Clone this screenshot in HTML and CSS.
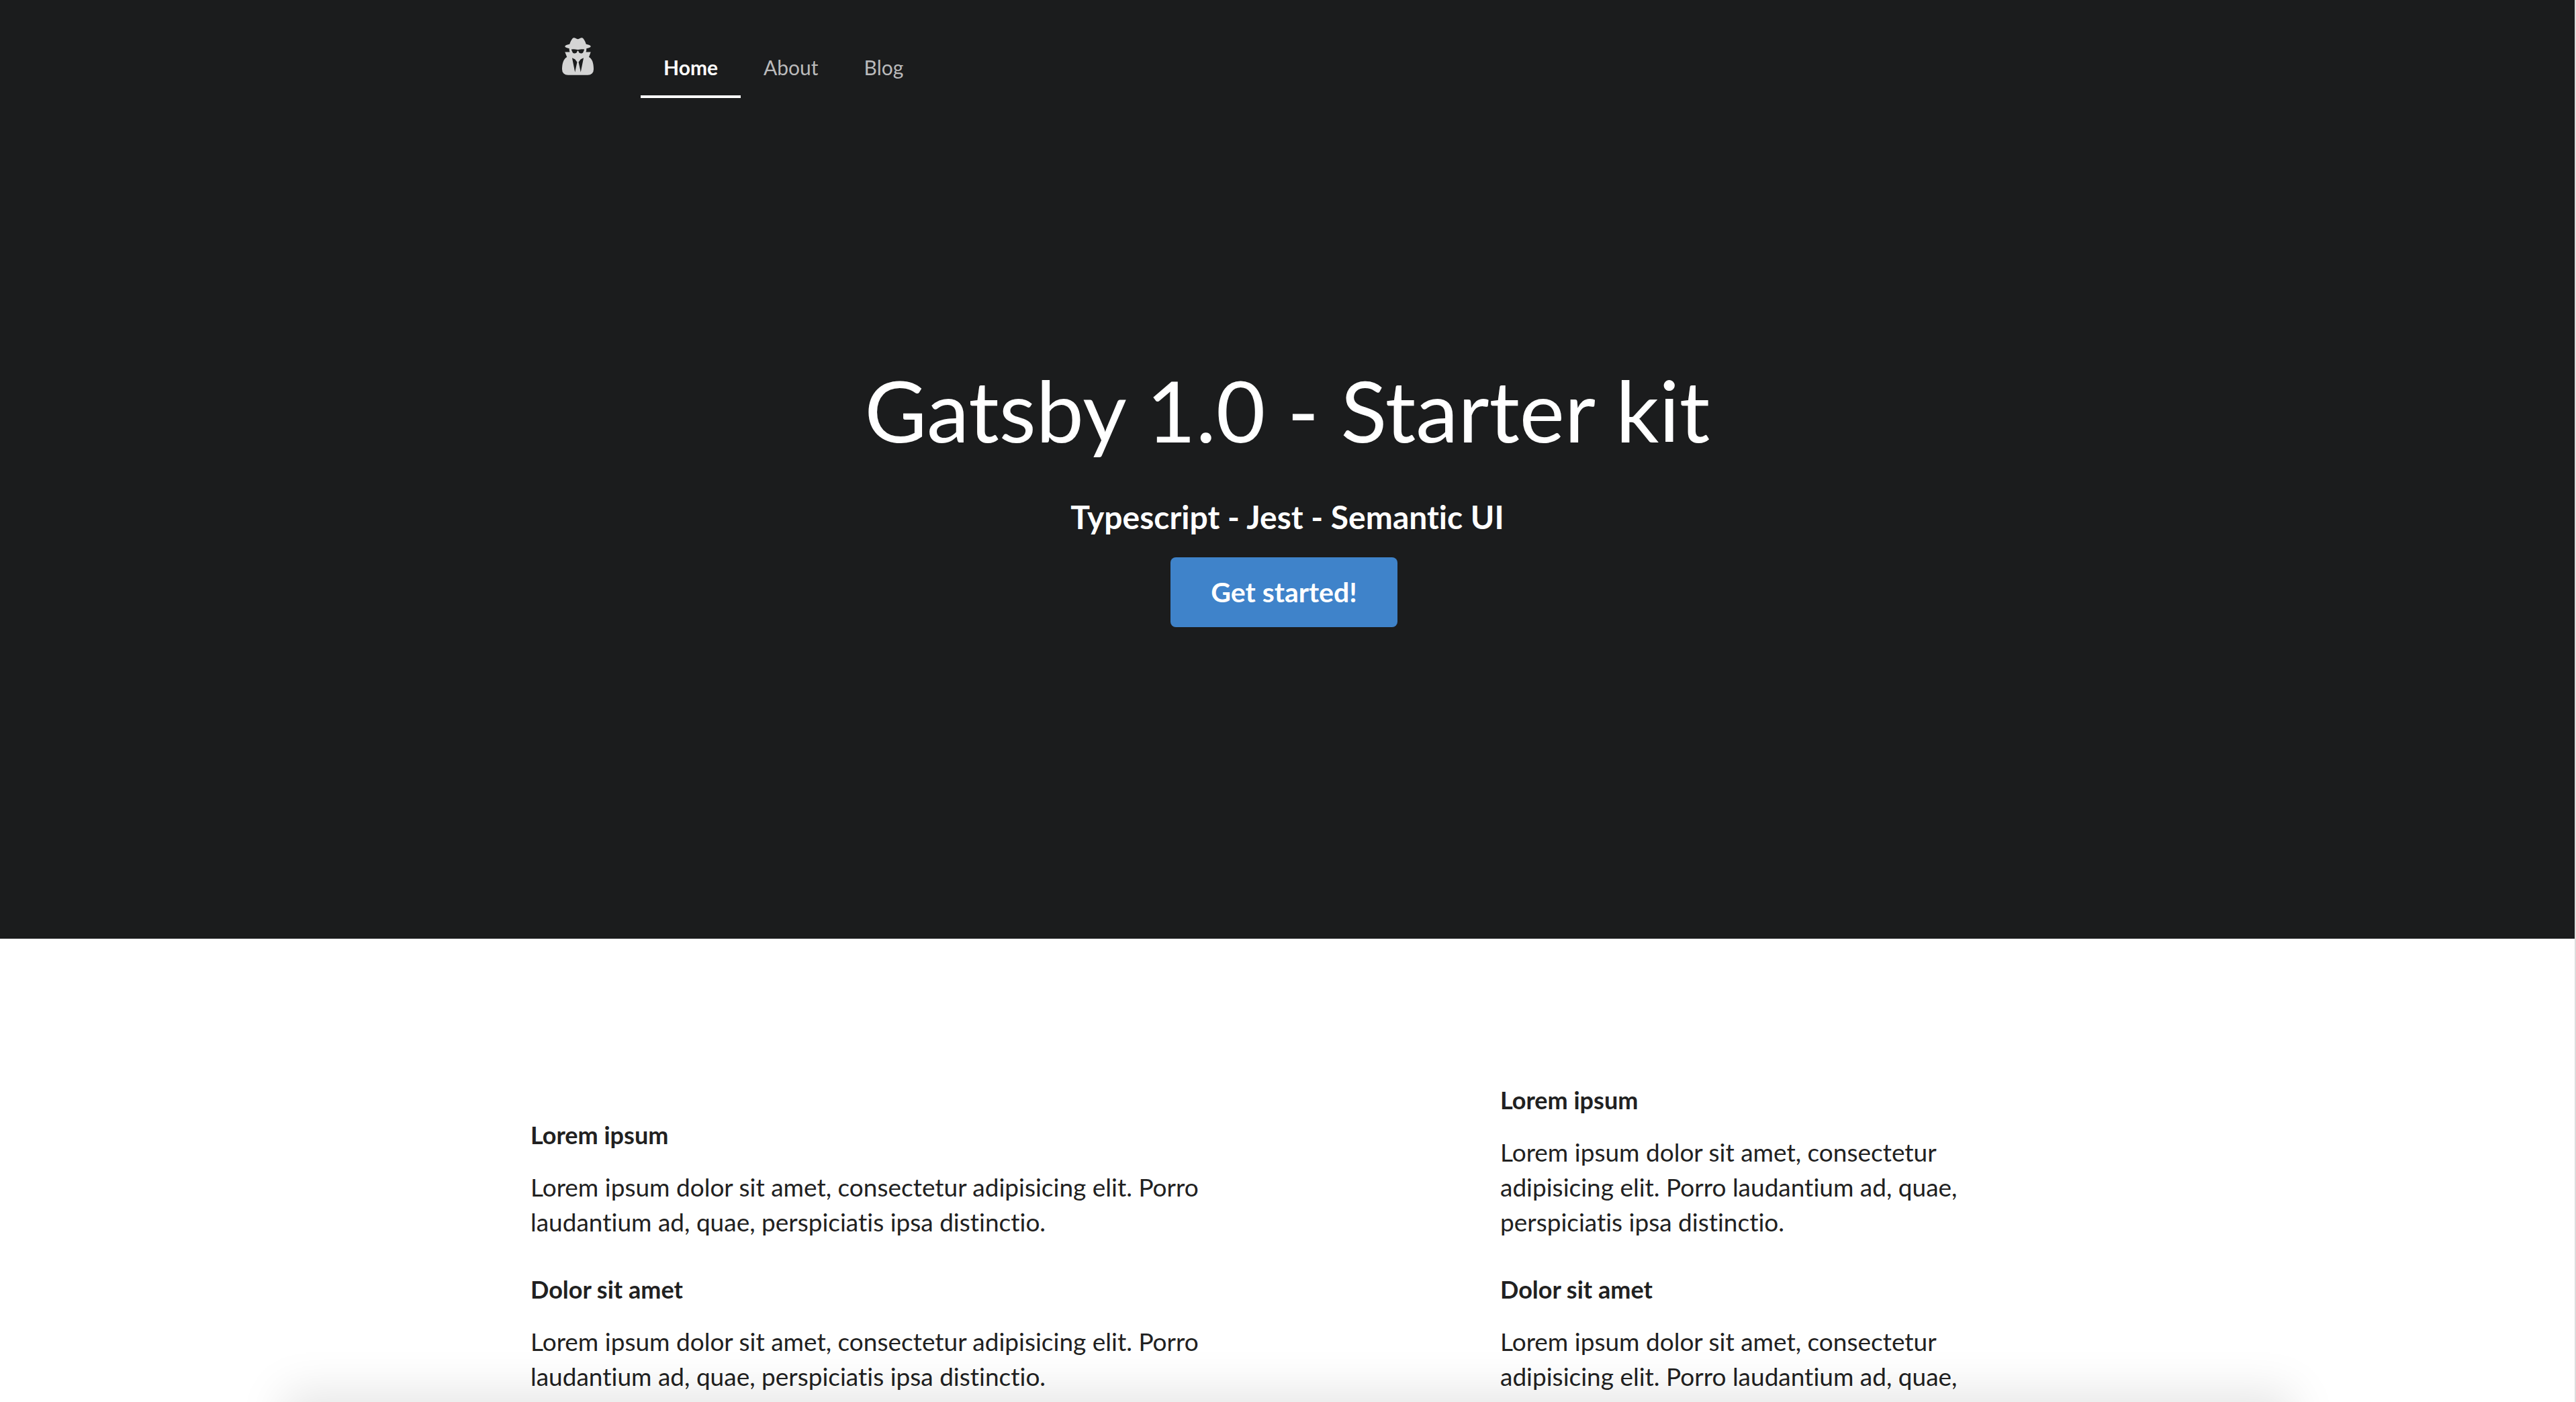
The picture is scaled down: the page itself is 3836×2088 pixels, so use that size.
FILE: index.html
```html
<!DOCTYPE html>
<html lang="en">
<head>
  <meta charset="utf-8">
  <title>Gatsby 1.0 - Starter kit</title>
  <link rel="stylesheet" href="styles.css">
</head>
<body class="page">
  <header class="hero">
    <nav class="menu container" aria-label="Main">
      <a class="menu-logo" href="#" aria-label="Starter kit">
        <svg class="logo" viewBox="0 0 1408 1664" aria-hidden="true">
          <path d="M576 1536l96-448-96-128-128-64zM832 1536l128-640-128 64-96 128zM992 526q-2-4-4-6-10-8-96-8-70 0-167 19-7 2-21 2t-21-2q-97-19-167-19-86 0-96 8-2 2-4 6 2 18 4 27 2 3 7.5 6.500t7.500 10.500q2 4 7.500 20.500t7 20.500 7.500 17 8.500 17 9 14 12 13.500 14 9.500 17.500 8 20.500 4 24.500 2q36 0 59-12.500t32.500-30 14.500-34.500 11.500-29.500 17.500-12.500h12q11 0 17.500 12.500t11.500 29.500 14.500 34.500 32.500 30 59 12.500q13 0 24.500-2t20.500-4 17.500-8 14-9.500 12-13.500 9-14 8.500-17 7.500-17 7-20.500 7.500-20.500q2-7 7.500-10.500t7.500-6.500q2-9 4-27zM1408 1405q0 121-73 190t-194 69h-874q-121 0-194-69t-73-190q0-61 4.500-118t19-125.500 37.500-123.500 63.500-103.500 93.500-74.500l-90-220h214q-22-64-22-128 0-12 2-32-194-40-194-96 0-57 210-99 17-62 51.500-134t70.500-114q32-37 76-37 30 0 84 31t84 31 84-31 84-31q44 0 76 37 36 42 70.500 114t51.500 134q210 42 210 99 0 56-194 96 7 81-20 160h214l-82 225q63 33 107.500 96.500t65.500 143.500 29 151.500 8 148.500z"/>
        </svg>
      </a>
      <a class="menu-item menu-item-active" href="#" aria-current="page">Home</a>
      <a class="menu-item" href="#about">About</a>
      <a class="menu-item" href="#blog">Blog</a>
    </nav>
    <div class="masthead">
      <h1 class="masthead-title">Gatsby 1.0 - Starter kit</h1>
      <h2 class="masthead-subtitle">Typescript - Jest - Semantic UI</h2>
      <button class="button" type="button">Get started!</button>
    </div>
  </header>
  <main class="content container">
    <section class="column column-wide">
      <h3 class="heading">Lorem ipsum</h3>
      <p class="text">Lorem ipsum dolor sit amet, consectetur adipisicing elit. Porro laudantium ad, quae, perspiciatis ipsa distinctio.</p>
      <h3 class="heading">Dolor sit amet</h3>
      <p class="text">Lorem ipsum dolor sit amet, consectetur adipisicing elit. Porro laudantium ad, quae, perspiciatis ipsa distinctio.</p>
    </section>
    <section class="column column-narrow">
      <h3 class="heading">Lorem ipsum</h3>
      <p class="text">Lorem ipsum dolor sit amet, consectetur adipisicing elit. Porro laudantium ad, quae, perspiciatis ipsa distinctio.</p>
      <h3 class="heading">Dolor sit amet</h3>
      <p class="text">Lorem ipsum dolor sit amet, consectetur adipisicing elit. Porro laudantium ad, quae, perspiciatis ipsa distinctio.</p>
    </section>
  </main>
  <div class="bottom-shade"></div>
</body>
</html>
```
FILE: styles.css
```css
* {
  box-sizing: border-box;
}

.page {
  min-height: 100vh;
  margin: 0;
  border-right: 2px solid #dddddd;
  background: #ffffff;
  color: #212121;
  font-family: Lato, "Open Sans", sans-serif;
  font-variant-ligatures: none;
}

.container {
  width: 100%;
  max-width: 2254px;
  margin: 0 auto;
}

/* Dark masthead */
.hero {
  min-height: 1398px;
  background: #1b1c1d;
  color: #ffffff;
}

.menu {
  display: flex;
  align-items: flex-end;
  height: 146px;
}

.menu-logo {
  display: flex;
  padding: 0 70px 34px 47px;
  color: #d4d4d4;
}

.logo {
  width: 47px;
  height: 56px;
  fill: currentColor;
}

.menu-item {
  padding: 0 34px 27px;
  border-bottom: 4px solid transparent;
  color: #bababb;
  font-size: 30px;
  line-height: 30px;
  text-decoration: none;
}

.menu-item-active {
  border-color: #ffffff;
  color: #ffffff;
  font-weight: 700;
}

.masthead {
  padding-top: 384px;
  text-align: center;
}

.masthead-title {
  margin: 0;
  font-size: 127px;
  font-weight: 400;
  line-height: 160px;
}

.masthead-subtitle {
  margin: 50px 0 0;
  font-size: 48px;
  font-weight: 700;
  line-height: 60px;
}

.button {
  margin: 30px 10px 0 0;
  padding: 32px 60px;
  border: 0;
  border-radius: 8px;
  background: #3f83ca;
  color: #ffffff;
  font-family: inherit;
  font-size: 41px;
  font-weight: 700;
  line-height: 40px;
}

/* Two text columns, centred against each other */
.content {
  display: flex;
  align-items: center;
  justify-content: space-between;
  padding: 216px 0;
}

.column-wide {
  flex: 0 1 1100px;
}

.column-narrow {
  flex: 0 1 810px;
}

.heading {
  margin: 0 0 28px;
  font-size: 36px;
  font-weight: 700;
  line-height: 48px;
}

.text {
  margin: 0 0 50px;
  font-size: 37px;
  line-height: 52px;
}

.text:last-child {
  margin-bottom: 0;
}

/* Soft shade rising from the lower window edge */
.bottom-shade {
  position: fixed;
  top: 100%;
  left: 11%;
  right: 11%;
  height: 200px;
  box-shadow: 0 -16px 64px rgba(0, 0, 0, 0.1);
}
```
